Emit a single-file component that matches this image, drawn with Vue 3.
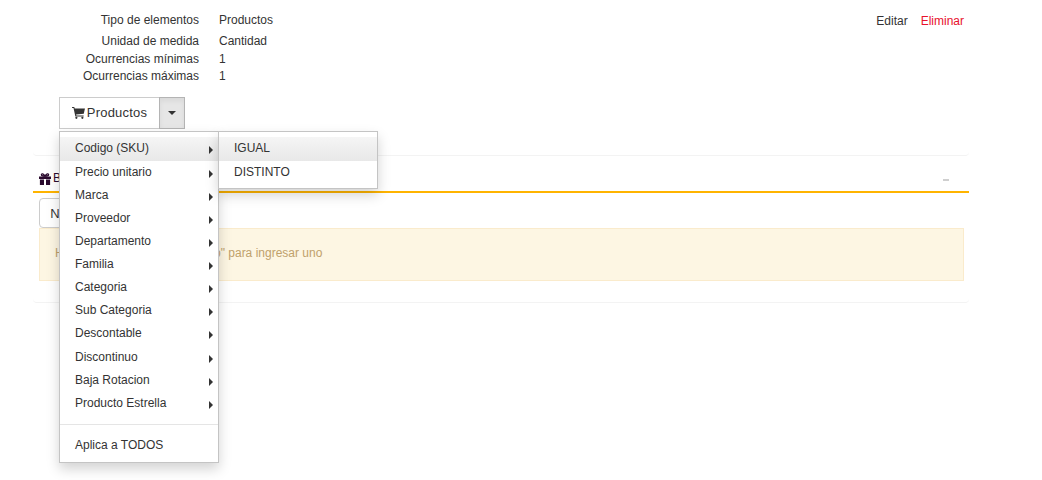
<template>
	<div class="page">
		<div class="card-top">
			<div class="top-row">
				<div class="info">
					<template v-for="row in info" :key="row.label">
						<div class="info-label">{{ row.label }}</div>
						<div class="info-value">{{ row.value }}</div>
					</template>
				</div>
				<div class="actions">
					<a class="act">Editar</a>
					<a class="act del">Eliminar</a>
				</div>
			</div>
			<div class="btn-group">
				<button class="btn main">
					<svg class="cart" viewBox="0 0 14 13" width="13" height="12">
						<path fill="#333" d="M0 0h2.4l.5 1.6H14l-1.3 5.6-8.3 1 .3 1.1H12.6v1.1H3.6L1.6 1.2H0z" />
						<circle fill="#333" cx="4.7" cy="11.7" r="1.2" />
						<circle fill="#333" cx="11.2" cy="11.7" r="1.2" />
					</svg>
					<span class="main-label">Productos</span>
				</button>
				<button class="btn toggle"><span class="caret"></span></button>

				<ul class="menu">
					<li v-for="(item, i) in items" :key="item" class="menu-item" :class="{ active: i === 0 }">
						{{ item }}
						<span class="arrow"></span>
						<ul v-if="i === 0" class="menu sub">
							<li class="menu-item active">IGUAL</li>
							<li class="menu-item">DISTINTO</li>
						</ul>
					</li>
					<li class="divider"></li>
					<li class="menu-item">Aplica a TODOS</li>
				</ul>
			</div>
		</div>

		<div class="card-bottom">
			<div class="head">
				<div class="head-title">
					<svg class="gift" viewBox="0 0 12 12" width="12" height="12">
						<path fill="#2a0a2e" d="M0 3.4h12v2.5H0zM.9 6.6h4.1V12H.9zM7 6.6h4.1V12H7z" />
						<path fill="none" stroke="#2a0a2e" stroke-width="1.3" d="M6 3.2C4.8.6 2.4.2 2.4 1.8 2.4 3.1 4.6 3.2 6 3.2c1.4 0 3.6-.1 3.6-1.4C9.6.2 7.2.6 6 3.2z" />
					</svg>
					<span>Bonificaciones</span>
				</div>
				<span class="collapse-bar"></span>
			</div>
			<div class="body">
				<button class="btn small">Nuevo</button>
				<div class="alert">Haga click en el enlace "Nuevo" para ingresar uno</div>
			</div>
		</div>
	</div>
</template>

<script setup>
const info = [
	{ label: 'Tipo de elementos', value: 'Productos' },
	{ label: 'Unidad de medida', value: 'Cantidad' },
	{ label: 'Ocurrencias mínimas', value: '1' },
	{ label: 'Ocurrencias máximas', value: '1' }
];

const items = [
	'Codigo (SKU)',
	'Precio unitario',
	'Marca',
	'Proveedor',
	'Departamento',
	'Familia',
	'Categoria',
	'Sub Categoria',
	'Descontable',
	'Discontinuo',
	'Baja Rotacion',
	'Producto Estrella'
];
</script>

<style>
body {
	background: #fff;
}
</style>

<style scoped>
.page {
	width: 936px;
	min-height: 480px;
	margin-left: 33px;
	font-family: 'Liberation Sans', Arial, sans-serif;
	font-size: 12px;
	line-height: 1.42857;
	color: #333;
}
.card-top {
	height: 156px;
	box-sizing: border-box;
	padding: 11px 0 0 26px;
	border-bottom: 1px solid #f3f3f3;
	border-radius: 0 0 4px 4px;
}
.top-row {
	display: flex;
	justify-content: space-between;
	align-items: flex-start;
}
.info {
	display: grid;
	grid-template-columns: 140px auto;
	grid-template-rows: 20px 22px 14px 20px;
	column-gap: 20px;
	align-items: center;
}
.info-label {
	text-align: right;
}
.actions {
	display: flex;
	gap: 13px;
	padding: 2px 5px 0 0;
}
.act {
	color: #333;
}
.act.del {
	color: #e8112d;
}
.btn-group {
	position: relative;
	display: flex;
	margin-top: 10px;
	width: 126px;
}
.btn {
	box-sizing: border-box;
	height: 32px;
	background: #fff;
	border: 1px solid #ccc;
	font-family: inherit;
	color: #333;
	padding: 0;
}
.main {
	width: 101px;
	font-size: 13px;
	letter-spacing: 0.2px;
	display: flex;
	align-items: center;
	justify-content: center;
	gap: 2px;
}
.main-label {
	position: relative;
	top: -1px;
}
.toggle {
	width: 26px;
	margin-left: -1px;
	background: #e6e6e6;
	border-color: #b4b4b4;
	box-shadow: inset 0 3px 5px rgba(0, 0, 0, 0.06);
	display: flex;
	align-items: center;
	justify-content: center;
}
.caret {
	width: 0;
	height: 0;
	border-top: 4px solid #333;
	border-left: 4px solid transparent;
	border-right: 4px solid transparent;
}
.menu {
	position: absolute;
	top: 34px;
	left: 0;
	width: 160px;
	box-sizing: border-box;
	margin: 0;
	padding: 5.37px 0 4.63px;
	list-style: none;
	background: #fff;
	border: 1px solid #c4c4c4;
	box-shadow: 0 6px 12px rgba(0, 0, 0, 0.175);
	z-index: 5;
}
.sub {
	top: -6.37px;
	left: 158px;
}
.menu-item {
	position: relative;
	padding: 3px 15px;
}
.menu-item.active {
	background: linear-gradient(to bottom, #f5f5f5, #e8e8e8);
}
.arrow {
	position: absolute;
	right: 5px;
	top: 9px;
	width: 0;
	height: 0;
	border-left: 4px solid #333;
	border-top: 4px solid transparent;
	border-bottom: 4px solid transparent;
}
.divider {
	height: 1px;
	margin: 9px 0;
	background: #e5e5e5;
}
.card-bottom {
	height: 147px;
	box-sizing: border-box;
	border-bottom: 1px solid #f3f3f3;
	border-radius: 0 0 4px 4px;
}
.head {
	height: 37px;
	box-sizing: border-box;
	display: flex;
	justify-content: space-between;
	align-items: center;
	padding: 11px 20px 0 6px;
	border-bottom: 2px solid #ffb400;
}
.head-title {
	display: flex;
	align-items: center;
	gap: 2px;
	color: #2a0a2e;
}
.collapse-bar {
	width: 6px;
	height: 2px;
	margin-top: 2px;
	background: #cfcfcf;
}
.body {
	padding: 5px 5px 0 6px;
}
.small {
	display: block;
	height: 30px;
	width: 60px;
	border-radius: 4px;
	font-size: 13px;
}
.alert {
	box-sizing: border-box;
	height: 53px;
	padding: 16px 15px;
	background: #fdf6e3;
	border: 1px solid #faebcc;
	color: #c0a16b;
}
</style>
